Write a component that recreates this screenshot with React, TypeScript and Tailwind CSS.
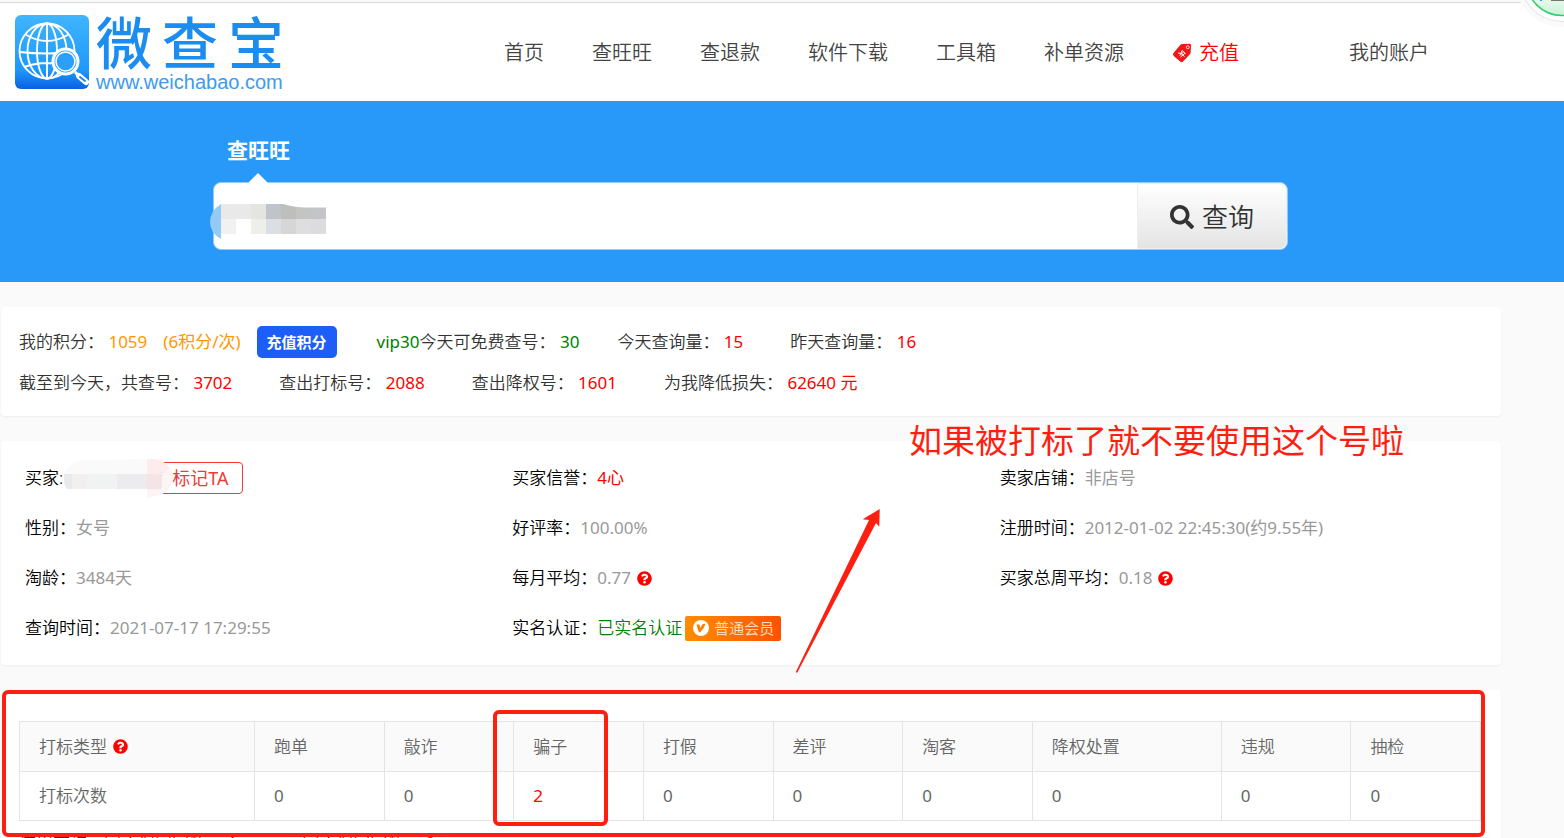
import type { ReactNode } from "react";
import { FaSearch, FaQuestionCircle } from "react-icons/fa";

const NAV = ["首页", "查旺旺", "查退款", "软件下载", "工具箱", "补单资源"];

const MARKS = [
  { name: "跑单", count: 0 },
  { name: "敲诈", count: 0 },
  { name: "骗子", count: 2 },
  { name: "打假", count: 0 },
  { name: "差评", count: 0 },
  { name: "淘客", count: 0 },
  { name: "降权处置", count: 0 },
  { name: "违规", count: 0 },
  { name: "抽检", count: 0 },
];

function Logo() {
  return (
    <a href="#" className="flex shrink-0 items-start gap-[7px]">
      <svg width="74" height="74" viewBox="0 0 74 74" className="mt-0.5 shrink-0" aria-hidden="true">
        <defs>
          <linearGradient id="logoFill" x1="0" y1="0" x2="0" y2="1">
            <stop offset="0" stopColor="#40b5ff" />
            <stop offset="0.75" stopColor="#1e98fa" />
            <stop offset="1" stopColor="#0b5fe4" />
          </linearGradient>
        </defs>
        <rect width="74" height="74" rx="6" fill="url(#logoFill)" />
        <g fill="none" stroke="#fff" strokeWidth="1.9">
          <circle cx="32" cy="36" r="27.5" />
          <path d="M32 8.500v55M10.500 19.500q21.500 13 43 0M4.500 37q27 3 55 0M9 52q23-8 46 0" />
          <ellipse cx="32" cy="36" rx="10" ry="27.500" />
          <ellipse cx="32" cy="36" rx="19.500" ry="27.500" />
        </g>
        <circle cx="50.500" cy="46.500" r="12.500" fill="#2a9ffb" stroke="#fff" strokeWidth="3" />
        <circle cx="50.500" cy="46.500" r="9.500" fill="none" stroke="#fff" strokeWidth="1.600" />
        <path d="M60 57l3 3" stroke="#fff" strokeWidth="3" />
        <path d="M64 61l7 6" stroke="#fff" strokeWidth="6" strokeLinecap="round" />
        <path d="M65 62l5 4" stroke="#2187f3" strokeWidth="2" strokeLinecap="round" />
      </svg>
      <span className="flex flex-col text-[#1b8df0]">
        <span className="flex gap-2.5 text-[56px] font-medium leading-[58px]">
          <span>微</span>
          <span>查</span>
          <span>宝</span>
        </span>
        <span className="font-['Liberation_Sans',sans-serif] text-xl font-normal leading-[22px] text-[#3b9bf3]">www.weichabao.com</span>
      </span>
    </a>
  );
}

function TagIcon() {
  return (
    <svg width="20" height="20" viewBox="0 0 20 20" aria-hidden="true">
      <path d="M8 2.200Q9 1 10.500 1l7-.3q1.600 0 1.600 1.600l-.5 7.200q0 1.200-.9 2l-6.700 7q-1.400 1.300-2.800 0L1.700 13Q.4 11.500 1.500 10z" fill="#f21616" />
      <circle cx="15.800" cy="4.200" r="1.500" fill="#f21616" stroke="#fff" strokeWidth=".8" />
      <path d="M6 10l3 .5 1-3M9 10.500l3.500 3M7.500 12.500l4-3.500M8.500 14l4.500-3.700M10 7.500l3.500 3" fill="none" stroke="#fff" strokeWidth="1" />
    </svg>
  );
}

function Help() {
  return <FaQuestionCircle className="size-[15px] shrink-0 text-[#f00]" aria-hidden="true" />;
}

function Stat({ label, value }: { label: ReactNode; value: string }) {
  return (
    <span className="whitespace-nowrap">
      {label} <span className="font-normal text-[#f00]">{value}</span>
    </span>
  );
}

function Field({ label, children }: { label: string; children?: ReactNode }) {
  return (
    <div className="flex h-[50px] items-center whitespace-nowrap">
      <dt className="text-black">{label}</dt>
      <dd className="flex items-center gap-1.5 font-normal text-[#999]">{children}</dd>
    </div>
  );
}

function SearchMosaic() {
  const rows = [
    ["#e9e9ea", "#e9e9e9", "#e4e4e0", "#bfc4c8", "#bebebd", "#c4c4c3", "#c4c5c8"],
    ["#f1f1f1", "#ffffff", "#eeeeea", "#dbdfe3", "#d6d6d6", "#dedede", "#dcdcdf"],
  ];
  return (
    <svg width="116" height="36" viewBox="0 0 116 36" className="absolute -left-1 top-[21px]" aria-hidden="true">
      <path d="M11 0Q0 7 0 18t11 17z" fill="#94caf8" />
      {rows.map((row, y) =>
        row.map((fill, x) => <rect key={`${x}-${y}`} x={11 + x * 15} y={y * 15} width="15" height="15" fill={fill} />),
      )}
      <path d="M73 0Q85 3.500 96 3.500H116V0z" fill="#fff" />
    </svg>
  );
}

function NameMosaic() {
  return (
    <svg width="110" height="40" viewBox="0 0 110 40" className="absolute left-[62px] top-[18px]" aria-hidden="true">
      <path d="M1 15Q7 1 22 1L84 0v30H4Q0 24 1 15z" fill="#fafafa" />
      <path d="M84 0h8q17 5 18 18 0 12-13 18l-13 3z" fill="#fdf5f5" />
      <path d="M84 0h8q10 2 14 9l-7 6H84z" fill="#fdecec" />
      <path d="M1 15h8v15H4Q0 26 1 15z" fill="#e9eaee" />
      <path d="M9 15h15v15H9z" fill="#f1f0ef" />
      <path d="M24 15h30v15H24z" fill="#f1f2f2" />
      <path d="M54 15h30v15H54z" fill="#ececee" />
      <path d="M84 15h15v15H84z" fill="#f4e4e6" />
    </svg>
  );
}

function FloatingBall() {
  return (
    <svg width="96" height="96" viewBox="0 0 96 96" className="absolute -right-[46px] -top-[68px]" aria-hidden="true">
      <defs>
        <linearGradient id="ballFill" x1="0" y1="0" x2="0" y2="1">
          <stop offset="0.6" stopColor="#ffffff" />
          <stop offset="1" stopColor="#c9f2d6" />
        </linearGradient>
      </defs>
      <circle cx="48" cy="48" r="47" fill="#fafafa" />
      <circle cx="48" cy="48" r="42" fill="#e6e6e6" />
      <circle cx="48" cy="48" r="41" fill="#fff" />
      <circle cx="48" cy="48" r="35.500" fill="url(#ballFill)" stroke="#31cf6a" strokeWidth="1.500" />
      <path d="M26 68h2v1h-2z" fill="#3b9bf3" />
      <path d="M37 68h13v1H37z" fill="#777" />
    </svg>
  );
}

export default function App() {
  return (
    <div className="relative h-screen overflow-hidden bg-[#fafafa] font-['Noto_Sans','Noto_Sans_CJK_SC',sans-serif] text-[17px] font-[350] leading-6 text-[#333]">
      <header className="mt-0.5 flex h-[99px] items-start border-t border-[#d9d9d9] bg-white pl-[15px] pt-2.5">
        <Logo />
        <nav className="ml-[220px] mt-6 flex items-center gap-12 whitespace-nowrap text-xl leading-8 text-[#444]">
          {NAV.map((item) => (
            <a key={item} href="#">
              {item}
            </a>
          ))}
          <a href="#" className="flex items-center gap-[7px] text-[#f00]">
            <TagIcon />
            充值
          </a>
          <a href="#" className="ml-[62px]">
            我的账户
          </a>
        </nav>
      </header>

      <section className="h-[181px] bg-[#2899f8] pl-[213px] pr-[276px] pt-[31px]">
        <h1 className="pl-3.5 text-[21px] font-bold leading-9 text-white">查旺旺</h1>
        <form className="relative mt-3.5 flex h-[68px] rounded-lg border border-[#8fcbfb] bg-white">
          <svg width="20" height="10" viewBox="0 0 20 10" className="absolute -top-[10px] left-[34px]" aria-hidden="true">
            <path d="M10 0l10 10H0z" fill="#fff" />
          </svg>
          <input type="text" aria-label="旺旺号" className="min-w-0 flex-1 rounded-l-lg bg-transparent px-4 text-2xl outline-none" />
          <SearchMosaic />
          <button
            type="button"
            className="flex w-[150px] items-center justify-center gap-2 rounded-r-lg border border-[#eee] bg-linear-to-b from-white to-[#e4e4e4] pt-0.5 text-[26px] text-[#333]"
          >
            <FaSearch className="size-6" aria-hidden="true" />
            查询
          </button>
        </form>
      </section>

      <main className="ml-px mr-[63px] mt-[25px] flex flex-col gap-[25px]">
        <section className="flex h-[109px] flex-col gap-[9px] rounded bg-white px-[18px] pt-[19px] shadow-xs">
          <div className="flex h-8 items-center whitespace-nowrap">
            <span>
              我的积分： <span className="font-normal text-[#ff9800]">1059</span>
            </span>
            <span className="ml-4 font-normal text-[#ff9800]">(6积分/次)</span>
            <button type="button" className="ml-4 h-8 rounded-[5px] bg-[#1e5ef8] px-2.5 text-[15px] font-bold text-white">
              充值积分
            </button>
            <span className="ml-10">
              <span className="font-normal text-[#008000]">vip30</span>今天可免费查号： <span className="font-normal text-[#008000]">30</span>
            </span>
            <span className="ml-[38px] flex gap-[47px]">
              <Stat label="今天查询量：" value="15" />
              <Stat label="昨天查询量：" value="16" />
            </span>
          </div>
          <div className="flex h-8 items-center gap-[47px]">
            <Stat label="截至到今天，共查号：" value="3702" />
            <Stat label="查出打标号：" value="2088" />
            <Stat label="查出降权号：" value="1601" />
            <Stat label="为我降低损失：" value="62640 元" />
          </div>
        </section>

        <section className="relative rounded bg-white py-3 pl-6 pr-3.5 shadow-xs">
          <dl className="grid grid-cols-3">
            <Field label="买家:">
              <button type="button" className="ml-[94px] h-8 rounded border border-[#ee3b35] px-3.5 text-lg text-[#ee3b35]">
                标记TA
              </button>
            </Field>
            <Field label="买家信誉：">
              <span className="text-[#f00]">4心</span>
            </Field>
            <Field label="卖家店铺：">非店号</Field>
            <Field label="性别：">女号</Field>
            <Field label="好评率：">100.00%</Field>
            <Field label="注册时间：">2012-01-02 22:45:30(约9.55年)</Field>
            <Field label="淘龄：">3484天</Field>
            <Field label="每月平均：">
              0.77 <Help />
            </Field>
            <Field label="买家总周平均：">
              0.18 <Help />
            </Field>
            <Field label="查询时间：">2021-07-17 17:29:55</Field>
            <Field label="实名认证：">
              <span className="flex items-center gap-[3px]">
                <span className="font-[350] text-[#008000]">已实名认证</span>
                <span className="flex h-[25px] w-24 items-center gap-1 rounded-xs bg-linear-to-r from-[#ff8c00] to-[#ff5000] pl-[7px] text-[15px] text-[#ffd9b8]">
                  <svg width="18" height="18" viewBox="0 0 18 18" aria-hidden="true">
                    <circle cx="9" cy="9" r="8" fill="#fff" />
                    <path d="M4.500 5.500h3l.8 3.600 2.400-4.100 2.800-.2q-1.300 4.700-5.300 8.400H6.800z" fill="#ff7d00" />
                  </svg>
                  普通会员
                </span>
              </span>
            </Field>
          </dl>
          <NameMosaic />
          <p className="absolute -top-6 left-[908px] whitespace-nowrap text-[33px] font-normal leading-[48px] text-[#ff1f10]">
            如果被打标了就不要使用这个号啦
          </p>
          <svg width="86" height="166" viewBox="0 0 86 166" className="absolute left-[794px] top-[67px]" aria-hidden="true">
            <path d="M84.700 1L67.700 11.300 74 12 .7 164.300l1.500.5L81 15l3.300 3.700z" fill="#ff1f10" />
          </svg>
        </section>

        <section className="relative rounded bg-white pb-6 pl-[18px] pr-5 pt-[31px] shadow-xs">
          <table className="w-full table-fixed border-collapse text-left text-[#666]">
            <colgroup>
              <col className="w-[235px]" />
              {MARKS.map((m) => (
                <col key={m.name} className={m.name.length > 2 ? "w-[189px]" : undefined} />
              ))}
            </colgroup>
            <thead className="bg-[#fafafa]">
              <tr className="h-[50px]">
                <th className="border border-[#e4e4e4] px-[19px] font-[350]">
                  <span className="flex items-center gap-1.5">
                    打标类型 <Help />
                  </span>
                </th>
                {MARKS.map((m) => (
                  <th key={m.name} className="border border-[#e4e4e4] px-[19px] font-[350]">
                    {m.name}
                  </th>
                ))}
              </tr>
            </thead>
            <tbody>
              <tr className="h-[49px] font-normal">
                <th className="border border-[#e4e4e4] px-[19px] font-[350]">打标次数</th>
                {MARKS.map((m) => (
                  <td key={m.name} className={m.count > 0 ? "border border-[#e4e4e4] px-[19px] text-[#f00]" : "border border-[#e4e4e4] px-[19px]"}>
                    {m.count}
                  </td>
                ))}
              </tr>
            </tbody>
          </table>
          <p className="mt-2.5 whitespace-nowrap">
            信用查询，同不保安家数： <span className="mr-12 font-normal text-[#f00]">1</span>，同不保安家数： <span className="font-normal text-[#f00]">0</span>
          </p>
          <div className="absolute left-px right-4 top-0 h-[147px] rounded-md border-4 border-[#ff1f10]" />
          <div className="absolute left-[492px] top-5 h-[116px] w-[115px] rounded-md border-4 border-[#ff1f10]" />
        </section>
      </main>
      <FloatingBall />
    </div>
  );
}
